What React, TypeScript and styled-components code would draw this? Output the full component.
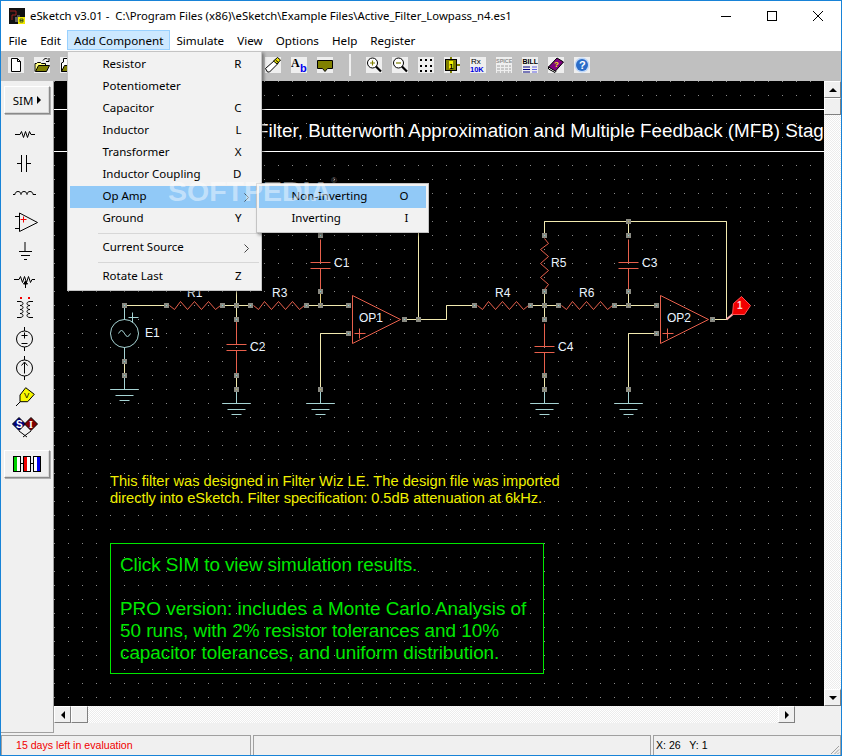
import React from "react";
import styled, { createGlobalStyle } from "styled-components";

const UI = `"Noto Sans", "Liberation Sans", sans-serif`;
const ARIAL = `"Liberation Sans", Arial, sans-serif`;

const Global = createGlobalStyle`
  html, body { margin: 0; padding: 0; background: #f0f0f0; }
  #root { width: 842px; height: 756px; overflow: hidden; }
  * { box-sizing: border-box; }
`;

const Window = styled.div`
  position: relative;
  width: 842px;
  height: 756px;
  border: 1px solid #1883d7;
  display: flex;
  flex-direction: column;
  background: #f0f0f0;
  font-family: ${UI};
  font-size: 11.65px;
  color: #000;
  overflow: hidden;
`;

const TitleBar = styled.div`
  height: 29px;
  background: #fff;
  display: flex;
  align-items: center;
  padding-left: 8px;
  flex: none;
`;
const TitleText = styled.div`
  margin-left: 5px;
  flex: 1;
  white-space: pre;
  font-size: 11.33px;
`;
const TitleButton = styled.div`
  width: 46px;
  height: 29px;
  display: flex;
  align-items: center;
  justify-content: center;
`;

const MenuBar = styled.div`
  height: 21px;
  background: #fff;
  display: flex;
  align-items: center;
  padding-left: 1px;
  flex: none;
  position: relative;
  z-index: 5;
`;
const MenuEntry = styled.div<{ $open?: boolean }>`
  position: relative;
  height: 20px;
  margin-top: -1px;
  padding: 0 5.5px;
  line-height: 20px;
  border: 1px solid ${(p) => (p.$open ? "#99d1ff" : "transparent")};
  background: ${(p) => (p.$open ? "#cce8ff" : "transparent")};
  white-space: nowrap;
`;

const Dropdown = styled.div<{ $sub?: boolean }>`
  position: absolute;
  top: ${(p) => (p.$sub ? "-3px" : "20px")};
  left: ${(p) => (p.$sub ? "186px" : "-1px")};
  width: ${(p) => (p.$sub ? "173px" : "195px")};
  background: #f2f2f2;
  border: 1px solid #c4c4c4;
  padding: 2px;
  box-shadow: 2px 2px 3px rgba(0, 0, 0, 0.4);
  z-index: 6;
`;
const DropItem = styled.div<{ $active?: boolean }>`
  position: relative;
  height: 22px;
  display: flex;
  align-items: center;
  padding: 0 18px 2px 32px;
  line-height: 20px;
  font-size: 11.5px;
  background: ${(p) => (p.$active ? "#91c9f7" : "transparent")};
`;
const DropLabel = styled.span`
  flex: 1;
`;
const DropSep = styled.div`
  height: 7px;
  margin-left: 28px;
  padding-top: 3px;
  &::before {
    content: "";
    display: block;
    height: 1px;
    background: #d7d7d7;
  }
`;
const Chevron = styled.svg`
  width: 5px;
  height: 9px;
  margin: 2px -8px 0 0;
`;

const Toolbar = styled.div`
  height: 30px;
  background: #c0c0c0;
  display: flex;
  align-items: flex-start;
  padding: 6px 0 0 7px;
  gap: 10px;
  flex: none;
`;
const Tile = styled.div<{ $gapLeft?: number }>`
  width: 16px;
  height: 16px;
  background: #efefef;
  margin-left: ${(p) => p.$gapLeft ?? 0}px;
  flex: none;
  svg { display: block; }
`;
const ToolDivider = styled.div`
  width: 2px;
  height: 22px;
  margin: -3px 5px 0 6px;
  background: #f0f0f0;
  flex: none;
`;

const Main = styled.div`
  flex: 1;
  display: flex;
  min-height: 0;
`;
const Sidebar = styled.div`
  width: 53px;
  height: 652px;
  background: #f0f0f0;
  border-right: 1px solid #a0a0a0;
  border-bottom: 1px solid #a0a0a0;
  display: flex;
  flex-direction: column;
  padding-top: 5px;
  flex: none;
`;
const Bevel = styled.div`
  width: 46px;
  height: 28px;
  margin-left: 3px;
  background: #f0f0f0;
  border: 1px solid;
  border-color: #fff #8a8a8a #8a8a8a #fff;
  box-shadow: 1px 1px 0 #b0b0b0, inset -1px -1px 0 #d8d8d8;
  display: flex;
  align-items: center;
  justify-content: center;
  gap: 4px;
  flex: none;
`;
const SimLabel = styled.span`
  font-size: 11.5px;
`;
const ToolSlot = styled.div`
  height: 29.3px;
  padding-right: 4px;
  display: flex;
  align-items: center;
  justify-content: center;
  flex: none;
`;
const SlotGroup = styled.div`
  margin-top: 5px;
  display: flex;
  flex-direction: column;
`;
const ModeButton = styled(Bevel)`
  margin-top: 9px;
`;

const Work = styled.div`
  flex: 1;
  display: flex;
  flex-direction: column;
  min-width: 0;
`;
const CanvasRow = styled.div`
  height: 625px;
  display: flex;
  flex: none;
`;
const Canvas = styled.div`
  position: relative;
  width: 770px;
  height: 625px;
  background: #000;
  overflow: hidden;
  flex: none;
`;
const Schematic = styled.svg`
  position: absolute;
  inset: 0;
  display: block;
`;
const Heading = styled.div`
  position: absolute;
  left: 203px;
  top: 39px;
  color: #fff;
  font: 18.8px/22px ${ARIAL};
  white-space: nowrap;
`;
const Note = styled.div`
  position: absolute;
  left: 56px;
  top: 392px;
  color: #f0f000;
  font: 14.65px/17px ${ARIAL};
  white-space: nowrap;
`;
const GreenBox = styled.div`
  position: absolute;
  left: 56px;
  top: 462px;
  width: 434px;
  height: 131px;
  border: 1px solid #00e800;
  padding: 10px 9px;
  color: #00e800;
  font: 18.9px/22px ${ARIAL};
  white-space: nowrap;
`;
const BoxGap = styled.div`
  height: 22px;
`;
const TextLine = styled.div<{ $track?: number }>`
  letter-spacing: ${(p) => p.$track ?? 0}px;
`;

const checker = `repeating-conic-gradient(#ececec 0 25%, #fff 0 50%) 0 0 / 2px 2px`;
const VScroll = styled.div`
  flex: 1;
  display: flex;
  flex-direction: column;
  background: ${checker};
`;
const HScroll = styled.div`
  height: 17px;
  width: 741px;
  display: flex;
  background: ${checker};
  flex: none;
`;
const ScrollBtn = styled.div<{ $grow?: boolean }>`
  width: ${(p) => (p.$grow ? "100%" : "17px")};
  height: 17px;
  background: #f0f0f0;
  border: 1px solid;
  border-color: #fff #808080 #808080 #fff;
  display: flex;
  align-items: center;
  justify-content: center;
  flex: none;
`;
const Spacer = styled.div`
  flex: 1;
`;
const Arrow = styled.div<{ $dir: "up" | "down" | "left" | "right"; $size?: number }>`
  width: 0;
  height: 0;
  border-style: solid;
  ${(p) => {
    const s = p.$size ?? 4;
    switch (p.$dir) {
      case "up":
        return `border-width: 0 ${s}px ${s}px; border-color: transparent transparent #000;`;
      case "down":
        return `border-width: ${s}px ${s}px 0; border-color: #000 transparent transparent;`;
      case "left":
        return `border-width: ${s}px ${s}px ${s}px 0; border-color: transparent #000 transparent transparent;`;
      default:
        return `border-width: ${s}px 0 ${s}px ${s}px; border-color: transparent transparent transparent #000;`;
    }
  }}
`;

const StatusBar = styled.div`
  height: 22px;
  display: flex;
  gap: 2px;
  padding-top: 2px;
  flex: none;
`;
const StatusPanel = styled.div<{ $w?: number; $red?: boolean; $pad: number }>`
  position: relative;
  ${(p) => (p.$w ? `width: ${p.$w}px;` : "flex: 1;")}
  border-top: 1px solid #a0a0a0;
  border-left: 1px solid #a0a0a0;
  border-right: 1px solid #a0a0a0;
  padding-left: ${(p) => p.$pad}px;
  font: 10.6px/19px ${ARIAL};
  color: ${(p) => (p.$red ? "#f00000" : "#000")};
  white-space: pre;
`;
const Grip = styled.svg`
  position: absolute;
  right: 0;
  bottom: 0;
`;

const Watermark = styled.div`
  position: absolute;
  left: 167px;
  top: 172px;
  color: rgba(255, 255, 255, 0.45);
  font: 700 28.5px/36px ${ARIAL};
  z-index: 9;
  pointer-events: none;
  white-space: nowrap;
  sup { font-size: 8px; font-weight: 400; vertical-align: 18px; line-height: 0; }
`;

/* ---------- schematic ---------- */
const WIRE = "#f2eab0";
const RED = "#e8604c";
const TEAL = "#a6d4d4";

const L = ({ p, c = WIRE }: { p: string; c?: string }) => (
  <polyline points={p} fill="none" stroke={c} strokeWidth={1} />
);
const Pin = ({ x, y, c = "#7fd0d0" }: { x: number; y: number; c?: string }) => (
  <g>
    <rect x={x - 2.5} y={y - 2.5} width={5} height={5} fill="#8a8a82" />
    <rect x={x - 0.5} y={y - 0.5} width={1} height={1} fill={c} />
  </g>
);
const ZIG = [
  [3, 0], [8, 4], [14, -4], [21, 4], [28, -4], [35, 4], [42, -4], [49, 4], [54, 0],
];
const ResH = ({ x, y }: { x: number; y: number }) => (
  <polyline
    points={ZIG.map(([a, b]) => `${x + a},${y + b}`).join(" ")}
    fill="none"
    stroke={RED}
    strokeWidth={1}
  />
);
const ResV = ({ x, y }: { x: number; y: number }) => (
  <polyline
    points={ZIG.map(([a, b]) => `${x + b},${y + a}`).join(" ")}
    fill="none"
    stroke={RED}
    strokeWidth={1}
  />
);
const Cap = ({ x, y }: { x: number; y: number }) => (
  <g>
    <L c={RED} p={`${x},${y + 2} ${x},${y + 25}`} />
    <L c={RED} p={`${x - 10},${y + 25} ${x + 10},${y + 25}`} />
    <L c={RED} p={`${x - 10},${y + 31} ${x + 10},${y + 31}`} />
    <L c={RED} p={`${x},${y + 31} ${x},${y + 54}`} />
  </g>
);
const Gnd = ({ x, y }: { x: number; y: number }) => (
  <g>
    <L c={TEAL} p={`${x},${y} ${x},${y + 14}`} />
    <L c={TEAL} p={`${x - 14},${y + 14} ${x + 14},${y + 14}`} />
    <L c={TEAL} p={`${x - 9},${y + 20} ${x + 9},${y + 20}`} />
    <L c={TEAL} p={`${x - 5},${y + 25} ${x + 5},${y + 25}`} />
  </g>
);
const OpAmp = ({ x }: { x: number }) => (
  <g>
    <polygon
      points={`${x},295 ${x},343 ${x + 48},319`}
      fill="none"
      stroke={RED}
      strokeWidth={1}
    />
    <L c={RED} p={`${x + 2},333 ${x + 13},333`} />
    <L c={RED} p={`${x + 7},328 ${x + 7},338`} />
  </g>
);
const Lbl = styled.text`
  fill: #eaf4ff;
  font: 12px ${ARIAL};
`;

const Drawing = () => (
  <Schematic width={770} height={625} viewBox="54 81 770 625">
    <defs>
      <pattern id="dots" x={54} y={81} width={14} height={14} patternUnits="userSpaceOnUse">
        <rect width={1} height={1} fill="#8c8c8c" />
      </pattern>
    </defs>
    <rect x={54} y={81} width={770} height={625} fill="url(#dots)" />
    <g shapeRendering="crispEdges">
      <rect x={54} y={109} width={770} height={1} fill="#fff" />
      <rect x={54} y={151} width={770} height={1} fill="#fff" />
    </g>
    <g transform="translate(0.5 0.5)">
      <L p="124,305 166,305" />
      <L p="222,305 250,305" />
      <L p="306,305 348,305" />
      <L p="320,291 320,305" c="#e8d080" />
      <L p="320,333 348,333" />
      <L p="320,333 320,389" />
      <L p="236,291 236,319" />
      <L p="404,319 446,319 446,305 474,305" />
      <L p="418,221 418,319" />
      <L p="320,221 418,221" />
      <L c={TEAL} p="124,305 124,319" />
      <circle cx={124} cy={333} r={14} fill="none" stroke={TEAL} strokeWidth={1} />
      <path d="M118 333 q3 -6 6 0 t6 0" fill="none" stroke={TEAL} />
      <L c={TEAL} p="124,347 124,361" />
      <L p="124,361 124,375" />
      <L c={TEAL} p="128,317 138,317" />
      <L c={TEAL} p="132,312 132,322" />
      <Gnd x={124} y={375} />
      <ResH x={166} y={305} />
      <ResH x={250} y={305} />
      <Cap x={236} y={319} />
      <L p="236,375 236,389" />
      <Gnd x={236} y={389} />
      <Cap x={320} y={237} />
      <Gnd x={320} y={389} />
      <OpAmp x={352} />
      <L p="530,305 558,305" />
      <L p="614,305 656,305" />
      <L p="628,333 656,333" />
      <L p="628,333 628,389" />
      <L p="544,291 544,319" />
      <L p="544,221 726,221 726,319 712,319" />
      <L p="544,221 544,235" />
      <L p="628,221 628,235" />
      <L p="628,291 628,305" />
      <ResH x={474} y={305} />
      <ResH x={558} y={305} />
      <ResV x={544} y={235} />
      <Cap x={628} y={237} />
      <Cap x={544} y={321} />
      <L p="544,375 544,389" />
      <Gnd x={544} y={389} />
      <Gnd x={628} y={389} />
      <OpAmp x={660} />
      {[
        [124, 305], [166, 305], [222, 305], [236, 319], [250, 305], [306, 305],
        [320, 235], [320, 291], [348, 305], [348, 333], [404, 319], [124, 361],
        [124, 375], [474, 305], [530, 305], [558, 305], [614, 305], [544, 235],
        [544, 291], [544, 319], [628, 235], [628, 291], [656, 305], [656, 333],
        [712, 319], [236, 375],
      ].map(([x, y]) => (
        <Pin key={`${x}-${y}`} x={x} y={y} />
      ))}
      {[
        [236, 305], [320, 305], [418, 319], [628, 221], [544, 305], [628, 305],
        [236, 389], [320, 389], [544, 389], [628, 389], [544, 375],
      ].map(([x, y]) => (
        <Pin key={`j${x}-${y}`} x={x} y={y} c="#b8b860" />
      ))}
      <polyline points="726,319 733,313" stroke="#ffb0b0" strokeWidth={2} fill="none" />
      <polygon points="733,303 741,296 750,305 744,314 732,314" fill="#f00000" stroke="#ff5050" strokeWidth={1} />
    </g>
    <Lbl x={187} y={297}>R1</Lbl>
    <Lbl x={272} y={297}>R3</Lbl>
    <Lbl x={495} y={297}>R4</Lbl>
    <Lbl x={579} y={297}>R6</Lbl>
    <Lbl x={551} y={267}>R5</Lbl>
    <Lbl x={334} y={267}>C1</Lbl>
    <Lbl x={250} y={351}>C2</Lbl>
    <Lbl x={642} y={267}>C3</Lbl>
    <Lbl x={558} y={351}>C4</Lbl>
    <Lbl x={145} y={337}>E1</Lbl>
    <Lbl x={359} y={322}>OP1</Lbl>
    <Lbl x={667} y={322}>OP2</Lbl>
    <text x={737} y={309} fill="#ffd0d0" fontFamily={ARIAL} fontSize={10} fontWeight={700}>1</text>
  </Schematic>
);

/* ---------- toolbar icons ---------- */
const Ico = ({ children }: { children: React.ReactNode }) => (
  <svg width={16} height={16} viewBox="0 0 16 16">{children}</svg>
);
const NewIcon = () => (
  <Ico>
    <path d="M3.5 1.5h6l3 3v10h-9z" fill="#fff" stroke="#000" />
    <path d="M9.5 1.5v3h3" fill="none" stroke="#000" />
  </Ico>
);
const OpenIcon = () => (
  <Ico>
    <path d="M1 14.5V6.5h1.5l1-1h3l1 1h4v2" fill="#ffff80" stroke="#000" />
    <path d="M1.5 14.5l3-6h11l-3 6z" fill="#808000" stroke="#000" />
    <path d="M9 3.5c1-2 3-2.5 4.5-1.5M15 1v3.5h-3" fill="none" stroke="#000" />
  </Ico>
);
const SaveIcon = () => (
  <Ico>
    <path d="M1.5 14.5V6l2-1v-3.5h10v8" fill="#fff" stroke="#000" />
    <path d="M1.5 14.5l3-6h11l-3 6z" fill="#808000" stroke="#000" />
  </Ico>
);
const PencilIcon = () => (
  <Ico>
    <path d="M0.5 11.5L9.5 3.5l3.5 3-8.5 8.5h-2z" fill="#fff" stroke="#000" />
    <path d="M8.5 4L12.5 0.5 15.5 3 12 7z" fill="#e8e000" stroke="#000" />
    <path d="M10.5 3l3 2.5" stroke="#000" fill="none" />
  </Ico>
);
const TinyText = styled.text<{ $c?: string }>`
  fill: ${(p) => p.$c ?? "#000"};
  font-family: "Liberation Sans", sans-serif;
  font-weight: 700;
`;
const AbIcon = () => (
  <Ico>
    <text x={0} y={10} fontFamily="'Liberation Serif', serif" fontWeight={700} fontSize={12}>A</text>
    <TinyText x={9} y={15} $c="#0000f0" fontSize={11}>b</TinyText>
  </Ico>
);
const NoteIcon = () => (
  <Ico>
    <path d="M0.5 3.5h15v8h-5l-2.5 3-2.5-3h-5z" fill="#808000" stroke="#000" />
  </Ico>
);
const ZoomIcon = ({ plus }: { plus?: boolean }) => (
  <Ico>
    <circle cx={6.5} cy={6} r={5} fill="#fff" stroke="#000" />
    <path d={plus ? "M4 6h5M6.5 3.5v5" : "M4 6h5"} stroke="#808000" strokeWidth={1.2} />
    <path d="M10 9.5l5 5" stroke="#000" strokeWidth={2.2} />
  </Ico>
);
const GridIcon = () => (
  <Ico>
    {[2, 7, 12].flatMap((x) =>
      [2, 8, 13].map((y) => <rect key={`${x}-${y}`} x={x} y={y} width={2} height={2} fill="#000" />)
    )}
  </Ico>
);
const NodeIcon = () => (
  <Ico>
    <path d="M7 0v2M7 14v2M12 8h4" stroke="#808000" strokeWidth={2} />
    <rect x={1.5} y={2.5} width={11} height={11} fill="#808000" stroke="#000" />
    <rect x={5} y={4} width={4} height={8} fill="#f0f000" />
    <TinyText x={5} y={11.5} fontSize={8}>1</TinyText>
  </Ico>
);
const RxIcon = () => (
  <Ico>
    <TinyText x={1} y={7} fontSize={8} style={{ fontWeight: 400 }}>Rx</TinyText>
    <TinyText x={0} y={15} fontSize={7.5} $c="#0000e0">10K</TinyText>
  </Ico>
);
const SpiceIcon = () => (
  <Ico>
    <TinyText x={0} y={6} fontSize={5.5} $c="#909090">SPICE</TinyText>
    <path d="M1 9h14M1 12h14M1 15h14" stroke="#a0a0a0" strokeDasharray="3 1" />
  </Ico>
);
const BillIcon = () => (
  <Ico>
    <TinyText x={0.5} y={7} fontSize={7}>BILL</TinyText>
    <path d="M1 10h7M1 12.5h7M1 15h7" stroke="#000080" />
    <path d="M10 10h5M10 12.5h5M10 15h5" stroke="#6060e0" />
  </Ico>
);
const BookIcon = () => (
  <Ico>
    <path d="M0.5 10L9 1l6.5 4-8.5 9.5z" fill="#800080" stroke="#000" />
    <path d="M0.5 10v2l6.5 3.5 1-1z" fill="#fff" stroke="#000" />
    <TinyText x={6} y={10} fontSize={8} $c="#f0f000">?</TinyText>
  </Ico>
);
const HelpIcon = () => (
  <Ico>
    <circle cx={8} cy={8} r={7.5} fill="#c0d8f8" />
    <circle cx={8} cy={8} r={6} fill="#2a6cc8" />
    <TinyText x={5} y={12} fontSize={11} $c="#fff">?</TinyText>
  </Ico>
);

/* ---------- sidebar icons ---------- */
const SideIco = ({ children }: { children: React.ReactNode }) => (
  <svg width={32} height={28} viewBox="0 0 32 28">
    <g fill="none" stroke="#000" strokeWidth={1}>{children}</g>
  </svg>
);
const Icons = [
  <SideIco key="r"><path d="M6 14.5h5l1.5-3 2 6 2-6 2 6 2-6 1.5 3h4" /></SideIco>,
  <SideIco key="c"><path d="M8 14.5h4.5M12.5 6v17M17.5 6v17M17.5 14.5h4.5" /></SideIco>,
  <SideIco key="l"><path d="M4 16.5h2c0-4 6-4 6 0c0-4 6-4 6 0c0-4 6-4 6 0h3" /></SideIco>,
  <SideIco key="o">
    <path d="M10.5 5v18.5L28.5 14.5zM6 8.5h4.5M6 20.5h4.5" />
    <path d="M11.5 11.5h6M14.5 8.5v6" stroke="#f00000" />
  </SideIco>,
  <SideIco key="g"><path d="M16 5v9M10 14.5h13M12 18.5h9M15 22.5h3" /></SideIco>,
  <SideIco key="p">
    <path d="M5 13.5h5l1.5-3 2 6 2-6 2 6 2-6 2 6 1.5-3h3" />
    <path d="M16.5 22v-7" />
    <path d="M14.5 18l2-3 2 3z" fill="#000" />
  </SideIco>,
  <SideIco key="t">
    <path d="M11 6.5c4 0 4 4 0 4c4 0 4 4 0 4c4 0 4 4 0 4c4 0 4 4 0 4M8 6.5h3M8 22.5h3" />
    <path d="M21 6.5c-4 0-4 4 0 4c-4 0-4 4 0 4c-4 0-4 4 0 4c-4 0-4 4 0 4M21 6.5h3M21 22.5h3" />
    <rect x={11} y={2} width={2} height={2} fill="#f00000" stroke="none" />
    <rect x={19} y={2} width={2} height={2} fill="#f00000" stroke="none" />
  </SideIco>,
  <SideIco key="v">
    <circle cx={15.5} cy={14} r={8} />
    <path d="M15.5 2v4M15.5 22v4M12.5 10.5h6M15.5 7.5v6M12.5 18.5h6" />
  </SideIco>,
  <SideIco key="i">
    <circle cx={15.5} cy={14} r={8} />
    <path d="M15.5 2v4M15.5 22v4M15.5 19.5v-11" />
    <path d="M12.5 11.5l3-3.5 3 3.5" />
  </SideIco>,
  <SideIco key="vp">
    <path d="M7 23l4-4" />
    <path d="M16.7 4.7L25.3 11.3 18.7 18.7H11V12z" fill="#f8f800" />
    <text x={15} y={15} fontFamily={ARIAL} fontSize={8} fill="#000" stroke="none">V</text>
  </SideIco>,
  <SideIco key="si">
    <path d="M10 18l8 6M22 18l-8 6" />
    <path d="M10 4.5L16.5 11 10 17.5 3.5 11z" fill="#000080" />
    <path d="M22 4.5L28.5 11 22 17.5 15.5 11z" fill="#800000" />
    <text x={7} y={15} fontFamily={ARIAL} fontSize={10} fontWeight={700} fill="#fff" stroke="none">S</text>
    <text x={20} y={15} fontFamily={"'Liberation Serif', serif"} fontSize={10} fontWeight={700} fill="#fff" stroke="none">I</text>
  </SideIco>,
];

const ModeBar = ({ x, color, right }: { x: number; color: string; right?: boolean }) => (
  <g>
    <rect x={x + 0.5} y={0.5} width={7} height={15} fill="#fff" stroke="#000" />
    <rect x={right ? x + 4 : x + 1} y={1} width={3} height={14} fill={color} />
  </g>
);
const ModeIcon = () => (
  <svg width={28} height={16} viewBox="0 0 28 16">
    <path d="M8 7.5h2M18 7.5h2" stroke="#000" />
    <ModeBar x={0} color="#00d000" />
    <ModeBar x={10} color="#f00000" />
    <ModeBar x={20} color="#0000f0" right />
  </svg>
);

const menu = [
  ["Resistor", "R"],
  ["Potentiometer", ""],
  ["Capacitor", "C"],
  ["Inductor", "L"],
  ["Transformer", "X"],
  ["Inductor Coupling", "D"],
];

const ChevronIcon = () => (
  <Chevron viewBox="0 0 5 9">
    <path d="M0.5 0.5L4.5 4.5 0.5 8.5" fill="none" stroke="#444" />
  </Chevron>
);

export default function App() {
  return (
    <>
      <Global />
      <Window>
        <TitleBar>
          <svg width={16} height={16} viewBox="0 0 16 16">
            <rect width={16} height={16} fill="#111" />
            <path d="M1 3h6v4h-4v5" fill="none" stroke="#a02020" />
            <path d="M8 8h3" stroke="#888" />
            <rect x={9} y={9} width={7} height={7} fill="#f0e800" />
            <rect x={6} y={9} width={3} height={5} fill="#606060" />
            <path d="M11 12.5h3M11 11h3v3h-3z" stroke="#204020" fill="none" strokeWidth={0.8} />
          </svg>
          <TitleText>{"eSketch v3.01 -  C:\\Program Files (x86)\\eSketch\\Example Files\\Active_Filter_Lowpass_n4.es1"}</TitleText>
          <TitleButton>
            <svg width={10} height={10} viewBox="0 0 10 10"><path d="M0 5.5h10" stroke="#000" /></svg>
          </TitleButton>
          <TitleButton>
            <svg width={10} height={10} viewBox="0 0 10 10"><rect x={0.5} y={0.5} width={9} height={9} fill="none" stroke="#000" /></svg>
          </TitleButton>
          <TitleButton>
            <svg width={10} height={10} viewBox="0 0 10 10"><path d="M0 0l10 10M10 0L0 10" stroke="#000" /></svg>
          </TitleButton>
        </TitleBar>

        <MenuBar>
          <MenuEntry>File</MenuEntry>
          <MenuEntry>Edit</MenuEntry>
          <MenuEntry $open>
            Add Component
            <Dropdown>
              {menu.map(([label, key]) => (
                <DropItem key={label}>
                  <DropLabel>{label}</DropLabel>
                  <span>{key}</span>
                </DropItem>
              ))}
              <DropItem $active>
                <DropLabel>Op Amp</DropLabel>
                <ChevronIcon />
                <Dropdown $sub>
                  <DropItem $active>
                    <DropLabel>Non-Inverting</DropLabel>
                    <span>O</span>
                  </DropItem>
                  <DropItem>
                    <DropLabel>Inverting</DropLabel>
                    <span>I</span>
                  </DropItem>
                </Dropdown>
              </DropItem>
              <DropItem>
                <DropLabel>Ground</DropLabel>
                <span>Y</span>
              </DropItem>
              <DropSep />
              <DropItem>
                <DropLabel>Current Source</DropLabel>
                <ChevronIcon />
              </DropItem>
              <DropSep />
              <DropItem>
                <DropLabel>Rotate Last</DropLabel>
                <span>Z</span>
              </DropItem>
            </Dropdown>
          </MenuEntry>
          <MenuEntry>Simulate</MenuEntry>
          <MenuEntry>View</MenuEntry>
          <MenuEntry>Options</MenuEntry>
          <MenuEntry>Help</MenuEntry>
          <MenuEntry>Register</MenuEntry>
        </MenuBar>

        <Toolbar>
          <Tile><NewIcon /></Tile>
          <Tile><OpenIcon /></Tile>
          <Tile><SaveIcon /></Tile>
          <Tile $gapLeft={179}><PencilIcon /></Tile>
          <Tile><AbIcon /></Tile>
          <Tile><NoteIcon /></Tile>
          <ToolDivider />
          <Tile><ZoomIcon plus /></Tile>
          <Tile><ZoomIcon /></Tile>
          <Tile><GridIcon /></Tile>
          <Tile><NodeIcon /></Tile>
          <Tile><RxIcon /></Tile>
          <Tile><SpiceIcon /></Tile>
          <Tile><BillIcon /></Tile>
          <Tile><BookIcon /></Tile>
          <Tile><HelpIcon /></Tile>
        </Toolbar>

        <Main>
          <Sidebar>
            <Bevel>
              <SimLabel>SIM</SimLabel>
              <Arrow $dir="right" />
            </Bevel>
            <SlotGroup>
              {Icons.map((icon) => (
                <ToolSlot key={icon.key}>{icon}</ToolSlot>
              ))}
            </SlotGroup>
            <ModeButton><ModeIcon /></ModeButton>
          </Sidebar>
          <Work>
            <CanvasRow>
              <Canvas>
                <Drawing />
                <Heading>Filter, Butterworth Approximation and Multiple Feedback (MFB) Stages</Heading>
                <Note>
                  <TextLine>This filter was designed in Filter Wiz LE. The design file was imported</TextLine>
                  <TextLine $track={-0.07}>directly into eSketch. Filter specification: 0.5dB attenuation at 6kHz.</TextLine>
                </Note>
                <GreenBox>
                  <TextLine $track={-0.08}>Click SIM to view simulation results.</TextLine>
                  <BoxGap />
                  <TextLine>PRO version: includes a Monte Carlo Analysis of</TextLine>
                  <TextLine>50 runs, with 2% resistor tolerances and 10%</TextLine>
                  <TextLine $track={-0.04}>capacitor tolerances, and uniform distribution.</TextLine>
                </GreenBox>
              </Canvas>
              <VScroll>
                <ScrollBtn $grow><Arrow $dir="up" /></ScrollBtn>
                <ScrollBtn $grow />
                <Spacer />
                <ScrollBtn $grow><Arrow $dir="down" /></ScrollBtn>
              </VScroll>
            </CanvasRow>
            <HScroll>
              <ScrollBtn><Arrow $dir="left" /></ScrollBtn>
              <ScrollBtn />
              <Spacer />
              <ScrollBtn><Arrow $dir="right" /></ScrollBtn>
            </HScroll>
          </Work>
        </Main>

        <StatusBar>
          <StatusPanel $w={250} $red $pad={14}>15 days left in evaluation</StatusPanel>
          <StatusPanel $pad={2} />
          <StatusPanel $w={188} $pad={2}>
            {"X: 26   Y: 1"}
            <Grip width={12} height={12} viewBox="0 0 12 12">
              <path d="M11 3L3 11M11 6.5L6.5 11M11 9.5L9.5 11" stroke="#a0a0a0" fill="none" />
            </Grip>
          </StatusPanel>
        </StatusBar>

        <Watermark>SOFTPEDIA<sup>®</sup></Watermark>
      </Window>
    </>
  );
}
